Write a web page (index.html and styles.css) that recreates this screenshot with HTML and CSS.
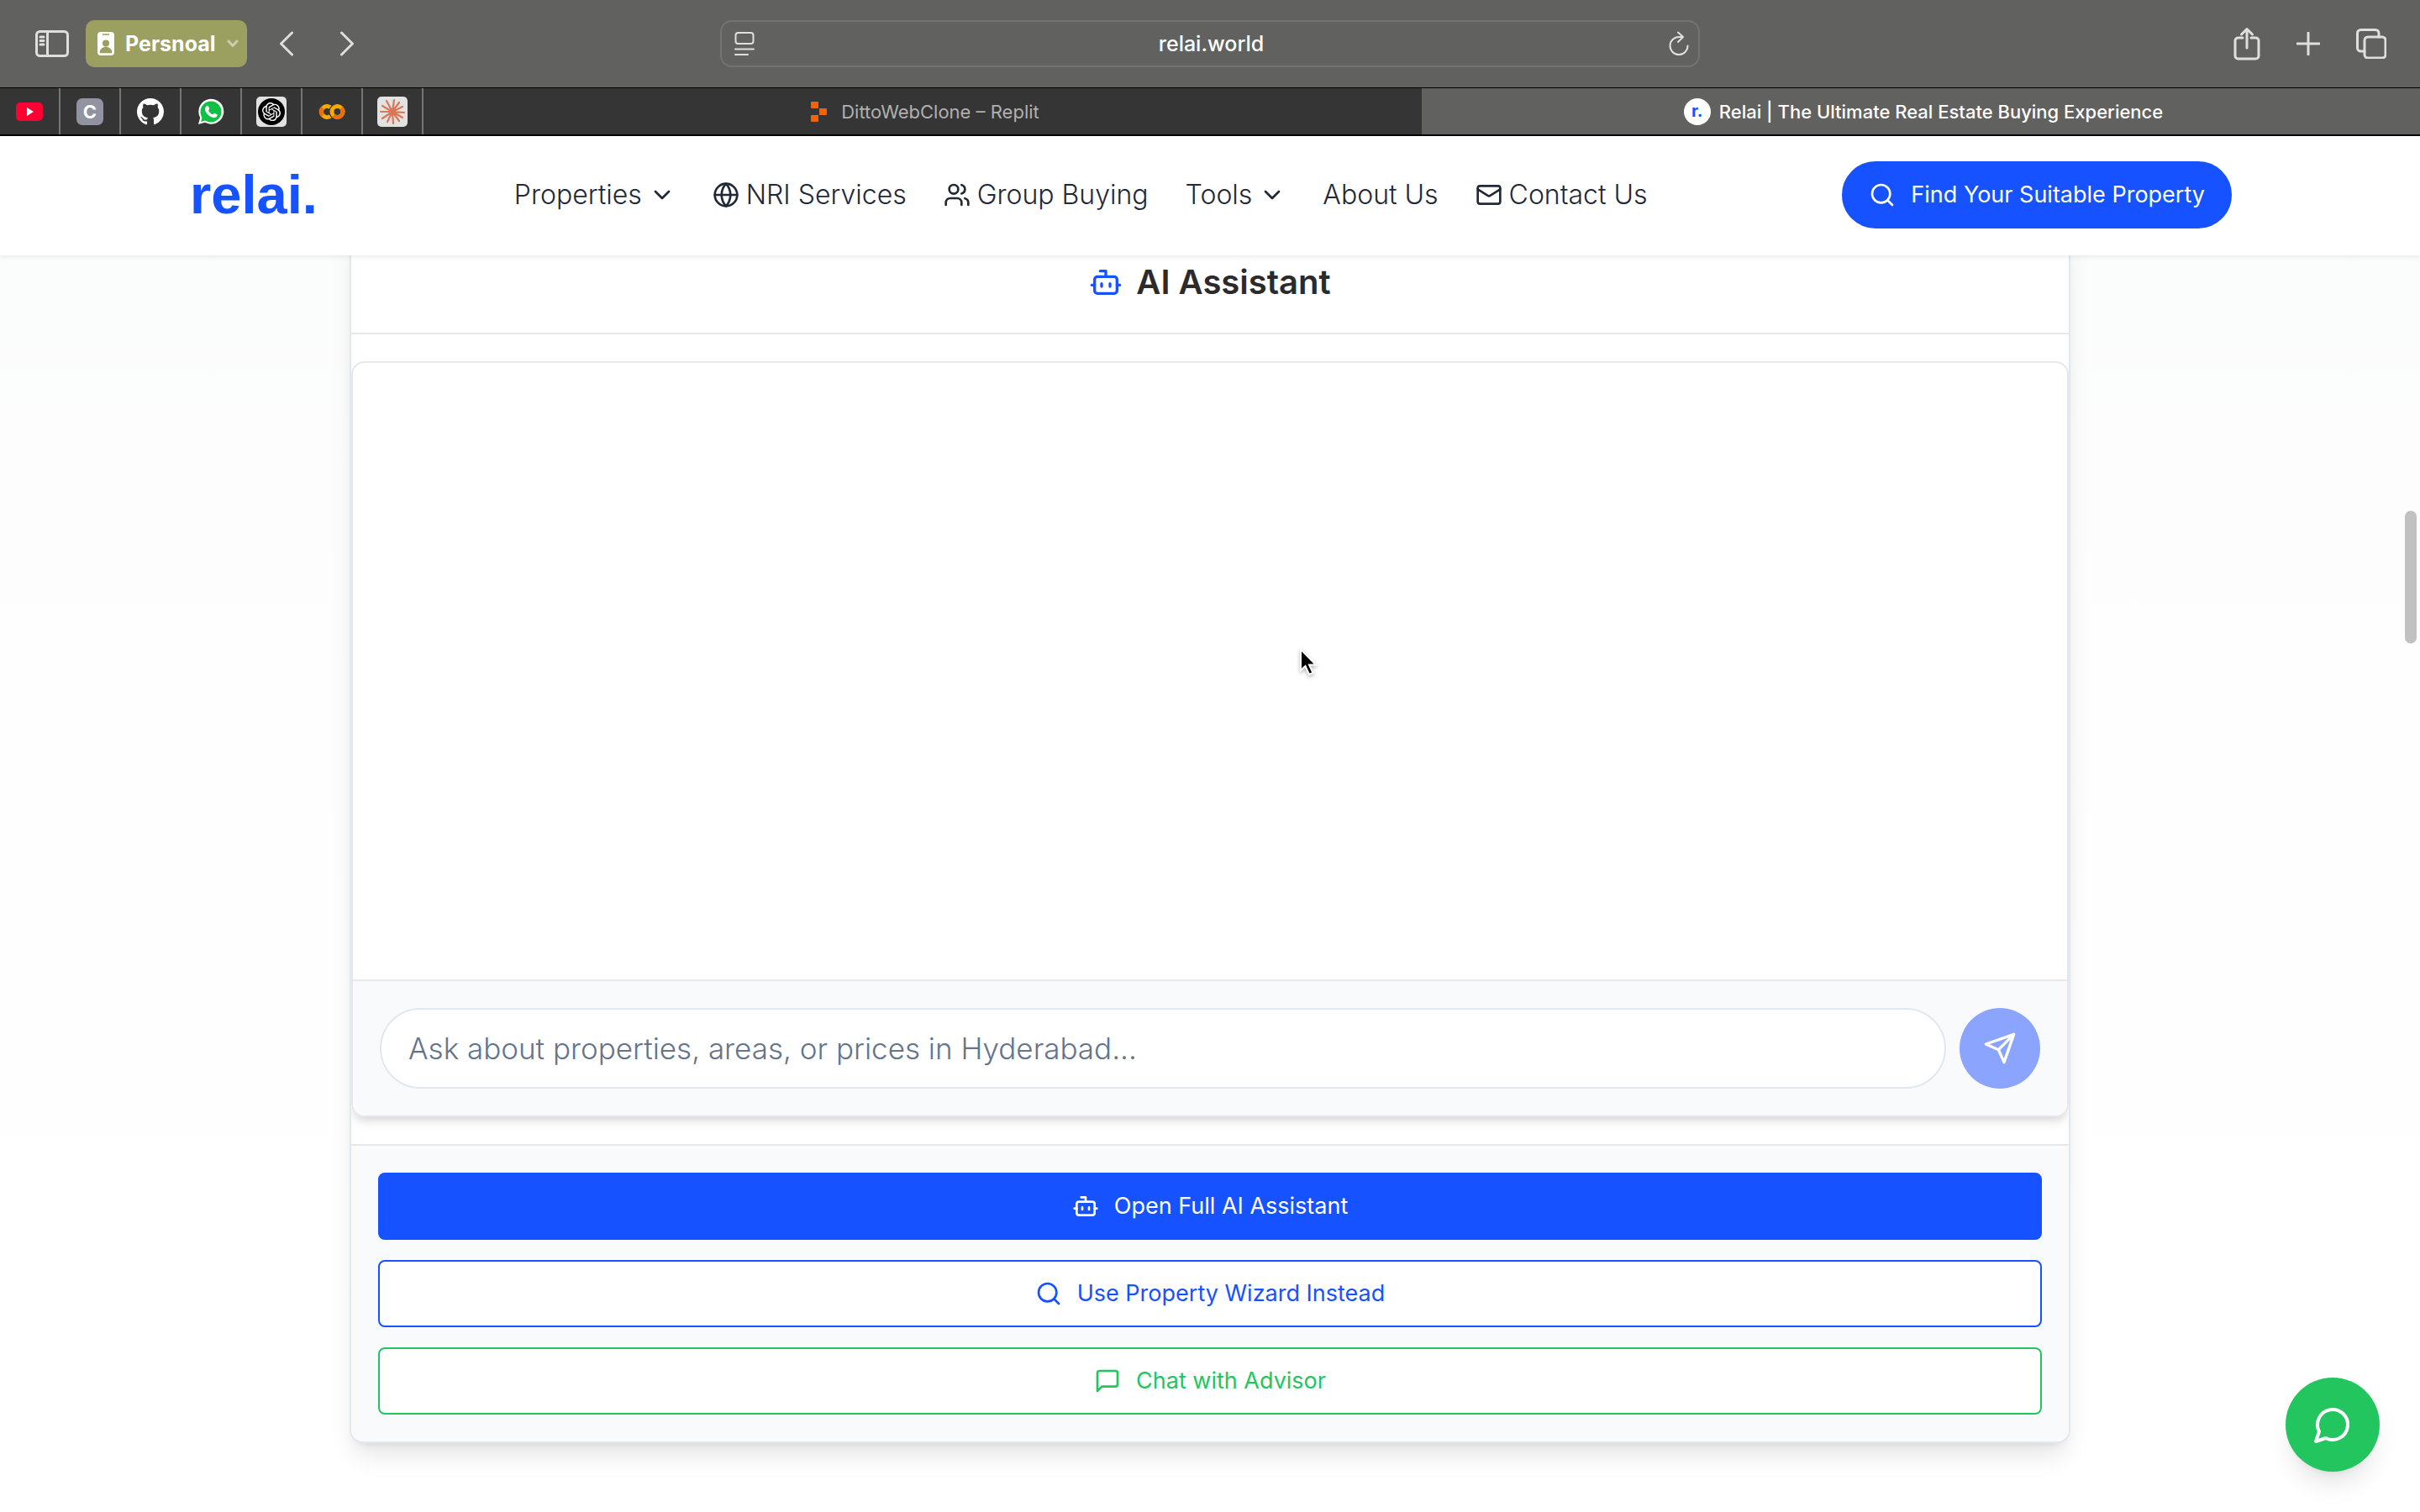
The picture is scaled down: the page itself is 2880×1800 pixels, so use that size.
FILE: index.html
```html
<!DOCTYPE html>
<html lang="en">
<head>
<meta charset="utf-8">
<title>Relai | The Ultimate Real Estate Buying Experience</title>
<link rel="stylesheet" href="styles.css">
</head>
<body>
<svg class="sprite" aria-hidden="true">
  <symbol id="i-down" viewBox="0 0 24 24"><path d="m6 9 6 6 6-6"/></symbol>
  <symbol id="i-bot" viewBox="0 0 24 24"><path d="M12 8V4H8"/><rect width="16" height="12" x="4" y="8" rx="2"/><path d="M2 14h2M20 14h2M15 13v2M9 13v2"/></symbol>
  <symbol id="i-search" viewBox="0 0 24 24"><circle cx="11" cy="11" r="8"/><path d="m21 21-4.3-4.3"/></symbol>
  <symbol id="i-globe" viewBox="0 0 24 24"><circle cx="12" cy="12" r="10"/><path d="M2 12h20M12 2a15.300 15.300 0 0 1 4 10 15.300 15.300 0 0 1-4 10 15.300 15.300 0 0 1-4-10 15.300 15.300 0 0 1 4-10z"/></symbol>
  <symbol id="i-users" viewBox="0 0 24 24"><circle cx="9" cy="7" r="4"/><path d="M2 21v-2a4 4 0 0 1 4-4h6a4 4 0 0 1 4 4v2M16 3.130a4 4 0 0 1 0 7.750M22 21v-2a4 4 0 0 0-3-3.870"/></symbol>
  <symbol id="i-mail" viewBox="0 0 24 24"><rect width="20" height="16" x="2" y="4" rx="2"/><path d="m22 7-8.970 5.700a1.940 1.940 0 0 1-2.060 0L2 7"/></symbol>
  <symbol id="i-send" viewBox="0 0 24 24"><path d="m22 2-7 20-4-9-9-4zM22 2 11 13"/></symbol>
  <symbol id="i-square-chat" viewBox="0 0 24 24"><path d="M21 15a2 2 0 0 1-2 2H7l-4 4V5a2 2 0 0 1 2-2h14a2 2 0 0 1 2 2z"/></symbol>
  <symbol id="i-round-chat" viewBox="0 0 24 24"><path d="M7.900 20A9 9 0 1 0 4 16.100L2 22Z"/></symbol>
</svg>

<div class="browser">
  <div class="toolbar">
    <div class="tools tools-left">
      <button class="tool" aria-label="Sidebar"><svg class="line" width="40" height="32" viewBox="0 0 40 32"><rect x="1.500" y="1.500" width="37" height="29" rx="4"/><path d="M14.500 2v28M6 8h4M6 12.500h4M6 17h4"/></svg></button>
      <button class="profile">
        <svg width="20" height="28" viewBox="0 0 20 28"><rect width="20" height="28" rx="4" fill="#fff"/><path d="M6 3h8M3.500 24.500c0-4 3-6 6.500-6s6.500 2 6.500 6z" fill="#9ba060" stroke="#9ba060" stroke-width="1.500"/><circle cx="10" cy="13.500" r="4" fill="#9ba060"/></svg>
        <span>Persnoal</span>
        <svg class="line faint" width="14" height="10" viewBox="0 0 14 10"><path d="m2 2 5 5.500L12 2"/></svg>
      </button>
      <button class="tool" aria-label="Back"><svg class="line" width="18" height="30" viewBox="0 0 18 30"><path d="M15.500 2 2.500 15l13 13"/></svg></button>
      <button class="tool" aria-label="Forward"><svg class="line" width="18" height="30" viewBox="0 0 18 30"><path d="m2.500 2 13 13-13 13"/></svg></button>
    </div>
    <div class="address">
      <svg class="line" width="24" height="30" viewBox="0 0 24 30"><rect x="1.500" y="2" width="21" height="13" rx="3"/><path d="M1 21.500h22M1 28h15"/></svg>
      <span>relai.world</span>
      <svg class="line" width="26" height="30" viewBox="0 0 26 30"><path d="M23.500 17.500a10.500 10.500 0 1 1-10.500-10.500h4M12 1.500l6 5.500-6 6"/></svg>
    </div>
    <div class="tools tools-right">
      <button class="tool" aria-label="Share"><svg class="line" width="32" height="40" viewBox="0 0 32 40"><path d="M11 13H5.500a3.500 3.500 0 0 0-3.500 3.500v18A3.500 3.500 0 0 0 5.500 38h21a3.500 3.500 0 0 0 3.500-3.500v-18a3.500 3.500 0 0 0-3.500-3.500H21M16 25V2.500M9.500 9 16 2.500 22.500 9"/></svg></button>
      <button class="tool" aria-label="New tab"><svg class="line" width="28" height="28" viewBox="0 0 28 28"><path d="M14 1v26M1 14h26"/></svg></button>
      <button class="tool" aria-label="Tabs"><svg class="line" width="36" height="36" viewBox="0 0 36 36"><rect x="10" y="10" width="25" height="25" rx="4"/><path d="M10 27H5.500a4 4 0 0 1-4-4V5.500a4 4 0 0 1 4-4H23a4 4 0 0 1 4 4V10"/></svg></button>
    </div>
  </div>
  <div class="tabs">
    <div class="pin"><svg width="32" height="22" viewBox="0 0 32 22"><rect width="32" height="22" rx="5" fill="#ff0033"/><path d="m13 6 8 5-8 5z" fill="#fff"/></svg></div>
    <div class="pin"><span class="letter">C</span></div>
    <div class="pin"><svg width="32" height="32" viewBox="0 0 16 16"><path fill="#fff" d="M8 0C3.580 0 0 3.580 0 8c0 3.540 2.290 6.530 5.470 7.590.4.070.55-.17.55-.38 0-.19-.01-.82-.01-1.490-2.010.37-2.530-.49-2.690-.94-.09-.23-.48-.94-.82-1.130-.28-.15-.68-.52-.01-.53.63-.01 1.080.58 1.230.82.72 1.210 1.870.87 2.330.66.07-.52.28-.87.51-1.070-1.780-.2-3.640-.89-3.640-3.950 0-.87.31-1.590.82-2.150-.08-.2-.36-1.020.08-2.120 0 0 .67-.21 2.200.82.64-.18 1.320-.27 2-.27s1.360.09 2 .27c1.530-1.040 2.200-.82 2.200-.82.44 1.100.16 1.920.08 2.120.51.56.82 1.270.82 2.150 0 3.070-1.870 3.750-3.650 3.950.29.25.54.73.54 1.480 0 1.070-.01 1.930-.01 2.200 0 .21.15.46.55.38A8.010 8.010 0 0 0 16 8c0-4.420-3.580-8-8-8z"/></svg></div>
    <div class="pin"><svg width="32" height="32" viewBox="0 0 32 32"><path d="M1 31l2.200-8A15 15 0 1 1 9 28.800z" fill="#fff"/><circle cx="16" cy="16" r="12.500" fill="#0fc143"/><path d="M4 28l2-7 5 5z" fill="#0fc143"/><path d="M10.500 9.500c1-1 2-1 2.500 0l1.200 2.800c.2.600-1.200 1.700-1.200 2.200 1 2.200 2.800 3.800 5 4.800.700.200 1.700-1.800 2.400-1.600l3 1.500c.600.300.3 2-.6 2.900-1.300 1.300-3.400 1.500-5.800.5-3.600-1.400-6.300-4-7.600-7.300-.9-2.400-.4-4.500 1.100-5.800z" fill="#fff"/></svg></div>
    <div class="pin"><svg width="36" height="36" viewBox="0 0 36 36"><rect width="36" height="36" rx="5" fill="#e2e2e2"/><circle cx="18" cy="18" r="16" fill="#000"/><g transform="translate(7 7) scale(.92)"><path fill="#fff" d="M22.282 9.821a5.985 5.985 0 0 0-.516-4.910 6.046 6.046 0 0 0-6.510-2.900A6.065 6.065 0 0 0 4.981 4.182a5.985 5.985 0 0 0-3.998 2.900 6.046 6.046 0 0 0 .743 7.097 5.980 5.980 0 0 0 .511 4.911 6.051 6.051 0 0 0 6.515 2.900A5.985 5.985 0 0 0 13.260 24a6.056 6.056 0 0 0 5.772-4.206 5.990 5.990 0 0 0 3.998-2.900 6.056 6.056 0 0 0-.748-7.073zM13.260 22.430a4.476 4.476 0 0 1-2.876-1.041l.141-.080 4.779-2.758a.795.795 0 0 0 .393-.682v-6.737l2.020 1.169a.071.071 0 0 1 .038.052v5.583a4.504 4.504 0 0 1-4.495 4.494zM3.600 18.304a4.471 4.471 0 0 1-.535-3.014l.142.085 4.783 2.759a.771.771 0 0 0 .781 0l5.843-3.369v2.332a.080.080 0 0 1-.033.062L9.740 19.950a4.499 4.499 0 0 1-6.140-1.646zM2.341 7.896a4.485 4.485 0 0 1 2.366-1.973V11.600a.766.766 0 0 0 .388.677l5.815 3.354-2.020 1.169a.076.076 0 0 1-.071 0l-4.830-2.787A4.504 4.504 0 0 1 2.341 7.872zm16.597 3.855l-5.833-3.387L15.119 7.200a.076.076 0 0 1 .071 0l4.830 2.791a4.494 4.494 0 0 1-.676 8.105v-5.678a.790.790 0 0 0-.406-.667zm2.010-3.023l-.141-.085-4.774-2.782a.776.776 0 0 0-.785 0L9.409 9.230V6.897a.066.066 0 0 1 .028-.061l4.830-2.787a4.499 4.499 0 0 1 6.681 4.660zM8.307 12.863l-2.020-1.164a.080.080 0 0 1-.038-.057V6.075a4.499 4.499 0 0 1 7.376-3.454l-.142.081-4.778 2.758a.795.795 0 0 0-.393.682zm1.097-2.366l2.603-1.499 2.607 1.500v2.999l-2.598 1.500-2.607-1.500z"/></g></svg></div>
    <div class="pin"><svg width="32" height="20" viewBox="0 0 32 20"><g fill="none" stroke-width="5"><path d="M14 4.800A6.500 6.500 0 1 0 14 15.200" stroke="#f9ab00"/><path d="M5 14.600A6.500 6.500 0 0 1 5 5.400" stroke="#e8710a"/><circle cx="22.500" cy="10" r="6.500" stroke="#f9ab00"/><path d="M27.100 5.400a6.500 6.500 0 0 1-9.200 9.200" stroke="#e8710a"/></g></svg></div>
    <div class="pin"><svg width="36" height="36" viewBox="0 0 36 36"><rect width="36" height="36" rx="5" fill="#e2e2e2"/><path d="M18 18 20 4M18 18l8-11M18 18l12-6M18 18l14 1M18 18l12 7M18 18l8 11M18 18l1 14M18 18 12 30M18 18 6 26M18 18 4 18M18 18 6 11M18 18 11 5" stroke="#d97757" stroke-width="2.200" stroke-linecap="round"/><circle cx="18" cy="18" r="3.500" fill="#d97757"/></svg></div>
    <div class="tab">
      <svg width="20" height="24" viewBox="0 0 20 24"><path fill="#f26207" d="M1 0h7q1 0 1 1v7H1q-1 0-1-1V1q0-1 1-1zM10 8h8q1 0 1 1v6q0 1-1 1h-8zM1 16h8v7q0 1-1 1H1q-1 0-1-1v-6q0-1 1-1z"/></svg>
      <span>DittoWebClone – Replit</span>
    </div>
    <div class="tab tab-active">
      <span class="favicon">r.</span>
      <span>Relai | The Ultimate Real Estate Buying Experience</span>
    </div>
  </div>
</div>

<div class="page">
  <header class="site-header">
    <div class="header-inner">
      <a class="logo" href="#">relai.</a>
      <nav class="nav">
        <a href="#">Properties <svg class="icon"><use href="#i-down"/></svg></a>
        <a href="#"><svg class="icon"><use href="#i-globe"/></svg>NRI Services</a>
        <a href="#"><svg class="icon"><use href="#i-users"/></svg>Group Buying</a>
        <a href="#">Tools <svg class="icon"><use href="#i-down"/></svg></a>
        <a href="#">About Us</a>
        <a href="#"><svg class="icon"><use href="#i-mail"/></svg>Contact Us</a>
      </nav>
      <button class="btn btn-primary btn-pill"><svg class="icon"><use href="#i-search"/></svg>Find Your Suitable Property</button>
    </div>
  </header>

  <main class="content">
    <section class="card">
      <h2 class="card-title"><svg class="icon"><use href="#i-bot"/></svg>AI Assistant</h2>
      <div class="chat">
        <div class="messages"></div>
        <form class="composer">
          <input type="text" aria-label="Message" placeholder="Ask about properties, areas, or prices in Hyderabad...">
          <button class="send" type="button" aria-label="Send"><svg class="icon"><use href="#i-send"/></svg></button>
        </form>
      </div>
      <div class="actions">
        <button class="btn btn-primary"><svg class="icon"><use href="#i-bot"/></svg>Open Full AI Assistant</button>
        <button class="btn btn-blue"><svg class="icon"><use href="#i-search"/></svg>Use Property Wizard Instead</button>
        <button class="btn btn-green"><svg class="icon"><use href="#i-square-chat"/></svg>Chat with Advisor</button>
      </div>
    </section>
  </main>
</div>

<button class="fab" aria-label="Chat"><svg class="icon"><use href="#i-round-chat"/></svg></button>
<div class="scroll-thumb"></div>
<svg class="cursor" width="24" height="36" viewBox="0 0 24 36"><path d="M2 2v25l5.500-5 4.500 10 4.500-2-4.500-9.500H20z" fill="#000" stroke="#fff" stroke-width="2"/></svg>
</body>
</html>
```
FILE: styles.css
```css
* { box-sizing: border-box; }

body {
  margin: 0;
  min-height: 100vh;
  display: flex;
  flex-direction: column;
  overflow: hidden;
  font-family: Inter, "Liberation Sans", sans-serif;
  color: #1f2937;
  background: #fff;
}

button { font: inherit; color: inherit; border: 0; background: none; padding: 0; }
a { color: inherit; text-decoration: none; }
svg { flex: none; display: block; }
.sprite { display: none; }

.icon {
  width: 32px;
  height: 32px;
  fill: none;
  stroke: currentColor;
  stroke-width: 2;
  stroke-linecap: round;
  stroke-linejoin: round;
}

/* Browser chrome */
.browser { background: #61615f; color: #fff; }

.toolbar {
  height: 104px;
  display: grid;
  grid-template-columns: 1fr 1166px 1fr;
  align-items: center;
  padding: 0 40px;
}

.line {
  fill: none;
  stroke: #dfdfde;
  stroke-width: 3;
  stroke-linecap: round;
  stroke-linejoin: round;
}
.faint { stroke: #cbceae; }
.tools { display: flex; align-items: center; }
.tools-left { gap: 20px; padding-left: 2px; }
.tools-left .tool + .tool { margin-left: 34px; }
.tools-left .profile + .tool { margin-left: 18px; }
.tools-right { gap: 43px; justify-content: flex-end; }

.profile {
  height: 56px;
  padding: 0 10px 0 14px;
  display: flex;
  align-items: center;
  gap: 13px;
  border-radius: 10px;
  background: #9ba060;
  font-size: 25px;
  font-weight: 700;
}

.address {
  height: 56px;
  display: flex;
  align-items: center;
  justify-content: space-between;
  padding: 0 10px 0 15px;
  border: 2px solid #737371;
  border-radius: 14px;
  font-size: 25px;
  font-weight: 500;
}
.address .line { stroke-width: 2; }

.tabs {
  height: 58px;
  display: flex;
  border-top: 1px solid #000;
  border-bottom: 2px solid #000;
}

.pin {
  width: 72px;
  display: flex;
  align-items: center;
  justify-content: center;
  background: #353535;
  border-right: 2px solid #757575;
}

.letter {
  width: 32px;
  height: 32px;
  border-radius: 7px;
  background: #9293a0;
  font-size: 22px;
  font-weight: 700;
  line-height: 32px;
  text-align: center;
}

.tab {
  flex: 1;
  display: flex;
  align-items: center;
  justify-content: center;
  gap: 16px;
  padding-left: 6px;
  background: #353535;
  color: #b0b0b0;
  font-size: 22px;
}
.tab-active { gap: 10px; background: none; color: #fff; font-weight: 500; }

.favicon {
  width: 32px;
  height: 32px;
  border-radius: 50%;
  background: #fff;
  color: #1652ff;
  font-size: 20px;
  font-weight: 700;
  line-height: 30px;
  text-align: center;
}

/* Site header */
.page {
  flex: 1;
  background: linear-gradient(#fafcfb, #fdfdfd 400px, #fff 1400px);
}

.site-header {
  position: relative;
  z-index: 1;
  background: #fff;
  box-shadow: 0 2px 6px rgba(0, 0, 0, .08);
}

.header-inner {
  max-width: 2560px;
  height: 142px;
  margin: 0 auto;
  padding: 0 64px 2px;
  display: flex;
  align-items: center;
  justify-content: space-between;
}

.logo {
  width: 156px;
  padding-left: 2px;
  color: #1652ff;
  font-family: "Liberation Sans", Arial, sans-serif;
  font-size: 65px;
  font-weight: 700;
  line-height: 80px;
}

.nav { display: flex; gap: 44px; font-size: 32px; font-weight: 300; line-height: 40px; }
.nav a { display: flex; align-items: center; gap: 8px; white-space: nowrap; }

/* Buttons */
.btn {
  height: 80px;
  display: flex;
  align-items: center;
  justify-content: center;
  gap: 18px;
  border: 2px solid currentColor;
  border-radius: 8px;
  background: #fff;
  font-size: 27px;
  line-height: 40px;
  white-space: nowrap;
}
.btn-primary { background: #1652ff; border-color: #1652ff; color: #fff; }
.btn-blue { color: #1652ff; }
.btn-green { color: #22c55e; }
.btn-pill { padding: 0 30px; border-radius: 40px; }

/* Assistant card */
.content { padding: 0 64px; }

.card {
  max-width: 2048px;
  margin: -30px auto 0;
  overflow: hidden;
  border: 2px solid #e2e8f0;
  border-radius: 16px;
  background: #fff;
  box-shadow: 0 20px 30px -6px rgba(0, 0, 0, .1), 0 8px 12px -8px rgba(0, 0, 0, .1);
}

.card-title {
  margin: 0;
  padding: 32px;
  display: flex;
  align-items: center;
  justify-content: center;
  gap: 16px;
  border-bottom: 2px solid #e5e7eb;
  color: #2b2b2b;
  font-size: 40px;
  font-weight: 600;
  line-height: 56px;
}
.card-title .icon { width: 40px; height: 40px; color: #1652ff; }

.chat {
  height: 900px;
  margin: 32px 0;
  display: flex;
  flex-direction: column;
  overflow: hidden;
  border: 2px solid #e5e7eb;
  border-radius: 16px;
  box-shadow: 0 8px 12px -2px rgba(0, 0, 0, .1), 0 4px 8px -4px rgba(0, 0, 0, .1);
}

.messages { flex: 1; }

.composer {
  display: flex;
  gap: 16px;
  padding: 32px;
  border-top: 2px solid #e5e7eb;
  background: #f9fafb;
}

.composer input {
  flex: 1;
  height: 96px;
  padding: 0 32px;
  border: 2px solid #e2e8f0;
  border-radius: 48px;
  background: #fff;
  font: 300 35px Inter, "Liberation Sans", sans-serif;
}
.composer input::placeholder { color: #64748b; opacity: 1; }

.send {
  width: 96px;
  height: 96px;
  display: grid;
  place-items: center;
  border-radius: 50%;
  background: #8ba5ff;
  color: #fff;
}
.send .icon { width: 40px; height: 40px; }

.actions {
  display: flex;
  flex-direction: column;
  gap: 24px;
  padding: 32px;
  border-top: 2px solid #e5e7eb;
  background: #f9fafb;
}

/* Overlays */
.fab {
  position: fixed;
  right: 48px;
  bottom: 48px;
  width: 112px;
  height: 112px;
  display: grid;
  place-items: center;
  border-radius: 50%;
  background: #22c55e;
  color: #fff;
  box-shadow: 0 20px 30px -6px rgba(0, 0, 0, .1), 0 8px 12px -8px rgba(0, 0, 0, .1);
}
.fab .icon { width: 48px; height: 48px; }

.scroll-thumb {
  position: fixed;
  top: 608px;
  right: 4px;
  width: 14px;
  height: 158px;
  border-radius: 7px;
  background: #c1c1c1;
}

.cursor {
  position: fixed;
  top: 771px;
  left: 1546px;
  filter: drop-shadow(0 2px 2px rgba(0, 0, 0, .3));
}
```
